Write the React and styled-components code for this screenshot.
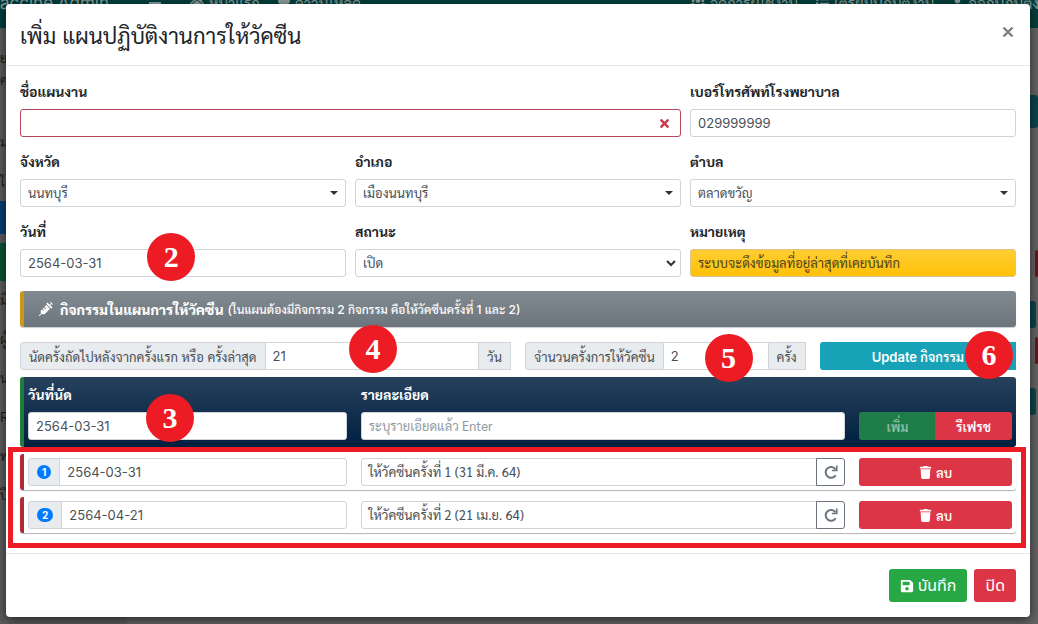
import React from "react";
import styled, { createGlobalStyle, css } from "styled-components";
import { FaBars, FaHome, FaHeart, FaUsers, FaList, FaUser, FaTrash, FaSave, FaTimes, FaSyringe } from "react-icons/fa";

const Global = createGlobalStyle`
  *, *::before, *::after { box-sizing: border-box; }
  body { margin: 0; background: #646464; }
  body, button, input, select, textarea { font-family: Inter, Sarabun, "Noto Sans", sans-serif; font-size: 13px; color: #495057; }
  button, input, select, textarea { margin: 0; }
`;

const Page = styled.div`
  position: relative;
  min-height: 100vh;
  overflow: hidden;
`;

/* The dimmed page under the dialog, scrolled a little way down. */
const Behind = styled.div`
  position: absolute;
  inset: -22px 0 0 0;
  display: flex;
  flex-direction: column;
  background: #646464;
`;
const Nav = styled.nav`
  display: flex;
  align-items: center;
  justify-content: space-between;
  height: 50px;
  flex: none;
  background: #033f3b;
  color: #8a9c9a;
  font-size: 15px;
  white-space: nowrap;
`;
const NavGroup = styled.div`
  display: flex;
  align-items: center;
  gap: 18px;
  margin-right: ${(p) => (p.$end ? "-18px" : 0)};
`;
const Brand = styled.span`
  width: 130px;
  font-size: 17px;
`;
const NavItem = styled.span`
  display: inline-flex;
  align-items: center;
  gap: 5px;
  ${(p) => p.$toggle && css`width: 24px;`}
`;
const Columns = styled.div`
  display: flex;
  justify-content: space-between;
  flex: 1;
`;
const Side = styled.div`
  width: 127px;
  padding-top: 20px;
  background: #5c5c5c;
  color: #1c1c1c;
`;
const SideItem = styled.div`
  height: ${(p) => p.$h}px;
  margin-bottom: 9px;
  background: ${(p) => p.$bg};
`;
const SideText = styled.div`
  height: ${(p) => p.$h || 39}px;
  line-height: 20px;
`;
const Actions = styled.div`
  display: flex;
  flex-direction: column;
  align-items: flex-end;
  width: 60px;
  padding-top: 67px;
`;
const ActionBlock = styled.div`
  width: ${(p) => p.$w || 40}px;
  height: ${(p) => p.$h || 27}px;
  margin: 0 ${(p) => p.$right || 0}px ${(p) => p.$gap}px 0;
  border-radius: 3px;
  background: ${(p) => p.$bg};
`;

const Modal = styled.section`
  position: relative;
  margin: 4px 8px 7px 6px;
  background: #fff;
  border-radius: 4px;
  box-shadow: 0 3px 12px rgba(0, 0, 0, 0.6);
`;
const Header = styled.header`
  display: flex;
  align-items: center;
  justify-content: space-between;
  height: 62px;
  padding: 0 14px;
  border-bottom: 1px solid #e2e4e7;
`;
const Title = styled.h1`
  margin: 0;
  padding-top: 2px;
  font-size: 22px;
  font-weight: 400;
  line-height: 32px;
  color: #212529;
`;
const Close = styled.button`
  display: flex;
  padding: 2px;
  margin-bottom: 6px;
  border: 0;
  background: none;
  color: #7f7f7f;
`;
const Body = styled.div`
  padding: 15px 14px 20px;
`;
const Fields = styled.div`
  display: grid;
  grid-template-columns: repeat(3, 1fr);
  gap: 14px 9px;
`;
const Field = styled.div`
  position: relative;
  min-width: 0;
  grid-column: span ${(p) => p.$span || 1};
`;
const Label = styled.label`
  display: block;
  height: 22px;
  margin-bottom: 6px;
  line-height: 22px;
  font-size: 14px;
  font-weight: 700;
  color: ${(p) => (p.$light ? "#fff" : "#212529")};
`;
const control = css`
  display: block;
  width: 100%;
  min-width: 0;
  height: 28px;
  padding: 0 7px;
  border: 1px solid #ced4da;
  border-radius: 3px;
  background: #fff;
  color: #495057;
  line-height: 26px;
  outline: none;
`;
const Input = styled.input`
  ${control}
  ${(p) => p.$invalid && css`border-color: #b5485a;`}
`;
const ThaiInput = styled.textarea.attrs({ rows: 1 })`
  ${control}
  font-family: Sarabun, "Noto Sans", sans-serif;
  resize: none;
  overflow: hidden;
  white-space: nowrap;
  ${(p) => p.$warn && css`
    background: linear-gradient(#ffcd33, #ffc107);
    border-color: #dcc58a;
    color: #4d4220;
  `}
  &::placeholder { color: #939a9f; opacity: 1; }
`;
const Select = styled.select`
  ${control}
  appearance: none;
`;
const Mark = styled.span`
  position: absolute;
  right: ${(p) => p.$right || 8}px;
  bottom: 0;
  display: flex;
  align-items: center;
  height: 28px;
  color: ${(p) => p.$color || "#333"};
  pointer-events: none;
`;
const Bar = styled.h2`
  display: flex;
  align-items: center;
  height: 36px;
  margin: 14px 0 15px;
  padding-left: 15px;
  border-left: 4px solid #c99a12;
  border-radius: 3px;
  background: linear-gradient(#828a91, #6c757d);
  box-shadow: 0 1px 1px rgba(0, 0, 0, 0.2);
  color: #fff;
  font-size: 14px;
  font-weight: 800;
  white-space: nowrap;
`;
const BarText = styled.span`
  margin: 0 4px 0 7px;
`;
const Hint = styled.small`
  font-size: 12px;
  font-weight: 500;
`;
const Settings = styled.div`
  display: grid;
  grid-template-columns: 35fr 20fr 14fr;
  gap: 14px;
  margin-bottom: 7px;
`;
const Group = styled.div`
  position: relative;
  display: flex;
  min-width: 0;
  & > * + * { margin-left: -1px; }
  & > :not(:first-child) { border-top-left-radius: 0; border-bottom-left-radius: 0; }
  & > :not(:last-child) { border-top-right-radius: 0; border-bottom-right-radius: 0; }
`;
const Addon = styled.label`
  display: flex;
  align-items: center;
  height: 28px;
  padding: 0 8px;
  border: 1px solid #ced4da;
  border-radius: 3px;
  background: #e9ecef;
  white-space: nowrap;
`;
const Button = styled.button`
  display: inline-flex;
  align-items: center;
  justify-content: center;
  gap: 4px;
  flex: ${(p) => (p.$large ? "none" : 1)};
  width: ${(p) => (p.$large ? "auto" : "100%")};
  height: ${(p) => (p.$large ? 33 : 28)}px;
  padding: 0 11px;
  border: 0;
  border-radius: 3px;
  background: ${(p) => p.$bg};
  color: #fff;
  font-weight: 600;
  white-space: nowrap;
  ${(p) => p.$large && css`
    font-family: "Noto Sans Thai", Inter, "Noto Sans", sans-serif;
    font-size: 16px;
    font-weight: 400;
  `}
  &:disabled { color: #8fc0a4; }
`;
const Redo = styled.button`
  display: flex;
  align-items: center;
  justify-content: center;
  flex: none;
  width: 29px;
  height: 28px;
  padding: 0;
  border: 1px solid #6c757d;
  border-radius: 3px;
  background: #fff;
  color: #6c757d;
`;
const line = css`
  display: grid;
  grid-template-columns: 25fr 38fr 12fr;
  column-gap: 14px;
  align-items: end;
  border-left: 4px solid;
  border-radius: 3px;
`;
const EntryPanel = styled.div`
  ${line}
  padding: 7px 4px;
  border-left-color: #1f7d3a;
  background: linear-gradient(#26415c, #001f3f);
`;
const List = styled.ul`
  position: relative;
  display: grid;
  gap: 7px;
  margin: 7px 0 0;
  padding: 0;
  list-style: none;
  /* red call-out frame over the list */
  &::after {
    content: "";
    position: absolute;
    inset: -7px -10px -15px -12px;
    border: 5px solid #ed1c24;
    pointer-events: none;
  }
`;
const Item = styled.li`
  ${line}
  padding: 4px;
  border-left-color: #b02a37;
  box-shadow: 0 1px 1px rgba(0, 0, 0, 0.3);
`;
const Badge = styled.span`
  padding: 0 5px;
  border-radius: 7px;
  background: #007bff;
  color: #fff;
  font-size: 10px;
  font-weight: 700;
  line-height: 14px;
  text-align: center;
`;
const Callout = styled.span`
  position: absolute;
  left: ${(p) => p.$left};
  bottom: ${(p) => p.$bottom}px;
  z-index: 1;
  display: flex;
  align-items: center;
  justify-content: center;
  width: 48px;
  height: 48px;
  && { border-radius: 50%; margin: 0; }
  background: #ed1c24;
  color: #fff;
  font: 700 30px/1 "Liberation Serif", serif;
`;
const Footer = styled.footer`
  display: flex;
  justify-content: flex-end;
  gap: 7px;
  padding: 15px 14px;
  border-top: 1px solid #e2e4e7;
`;

const Caret = () => (
  <Mark>
    <svg width="8" height="4" viewBox="0 0 8 4"><path d="M0 0h8L4 4z" fill="currentColor" /></svg>
  </Mark>
);
const Chevron = () => (
  <Mark $right={5}>
    <svg width="10" height="7" viewBox="0 0 10 7"><path d="M1 1l4 4 4-4" fill="none" stroke="currentColor" strokeWidth="2" /></svg>
  </Mark>
);
const RedoIcon = () => (
  <svg width="14" height="14" viewBox="0 0 14 14" fill="none" stroke="currentColor" strokeWidth="2">
    <path d="M11.6 4.4A5.4 5.4 0 1 0 11.7 10.2" />
    <path d="M12.8 0.6v4.9H7.9" strokeWidth="1.6" />
  </svg>
);

const PLACES = [
  ["province", "จังหวัด", "นนทบุรี"],
  ["district", "อำเภอ", "เมืองนนทบุรี"],
  ["subdistrict", "ตำบล", "ตลาดขวัญ"],
];
const DOSES = [
  ["2564-03-31", "ให้วัคซีนครั้งที่ 1 (31 มี.ค. 64)"],
  ["2564-04-21", "ให้วัคซีนครั้งที่ 2 (21 เม.ย. 64)"],
];

function PageBehind() {
  return (
    <Behind aria-hidden="true">
      <Nav>
        <NavGroup>
          <Brand>accine Admin</Brand>
          <NavItem $toggle><FaBars size={14} /></NavItem>
          <NavItem><FaHome size={14} />หน้าแรก</NavItem>
          <NavItem><FaHeart size={12} />ดาวน์โหลด</NavItem>
        </NavGroup>
        <NavGroup $end>
          <NavItem><FaUsers size={14} />จัดการผู้ใช้งาน</NavItem>
          <NavItem><FaList size={13} />เตรียมปฏิบัติงาน</NavItem>
          <NavItem><FaUser size={11} />ออกปฏิบัติงาน</NavItem>
        </NavGroup>
      </Nav>
      <Columns>
        <Side>
          <SideText $h={22}>ย</SideText>
          <SideText $h={62}>ค</SideText>
          <SideText $h={40}>มา</SideText>
          <SideText $h={29}>ใ</SideText>
          <SideItem $h={33} $bg="#063f70" />
          <SideItem $h={38} $bg="#0b5134" />
          <SideText>มี</SideText>
          <SideText>ผู้</SideText>
          <SideText>น</SideText>
          <SideText>R</SideText>
          <SideText>พ</SideText>
          <SideText>ปี</SideText>
        </Side>
        <Actions>
          <ActionBlock $bg="#0b454d" $h={33} $gap={122} />
          <ActionBlock $bg="#64171f" $w={3} $gap={24} />
          <ActionBlock $bg="#0b454d" $right={2} $gap={9} />
          <ActionBlock $bg="#64171f" $w={3} $gap={24} />
          <ActionBlock $bg="#0b454d" $right={2} $gap={0} />
        </Actions>
      </Columns>
    </Behind>
  );
}

export default function App() {
  return (
    <Page>
      <Global />
      <PageBehind />
      <Modal role="dialog" aria-labelledby="title">
        <Header>
          <Title id="title">เพิ่ม แผนปฏิบัติงานการให้วัคซีน</Title>
          <Close type="button" aria-label="ปิด">
            <svg width="12" height="12" viewBox="0 0 12 12" stroke="currentColor" strokeWidth="2.4"><path d="M1.5 1.5l9 9M10.5 1.5l-9 9" /></svg>
          </Close>
        </Header>
        <Body>
          <Fields>
            <Field $span={2}>
              <Label htmlFor="plan">ชื่อแผนงาน</Label>
              <Input id="plan" $invalid />
              <Mark $right={10} $color="#c8374a"><FaTimes size={13} /></Mark>
            </Field>
            <Field>
              <Label htmlFor="phone">เบอร์โทรศัพท์โรงพยาบาล</Label>
              <Input id="phone" defaultValue="029999999" />
            </Field>
            {PLACES.map(([id, label, value]) => (
              <Field key={id}>
                <Label htmlFor={id}>{label}</Label>
                <Select id={id}><option>{value}</option></Select>
                <Caret />
              </Field>
            ))}
            <Field>
              <Label htmlFor="date">วันที่</Label>
              <Input id="date" defaultValue="2564-03-31" />
              <Callout $left="39%" $bottom={-4}>2</Callout>
            </Field>
            <Field>
              <Label htmlFor="status">สถานะ</Label>
              <Select id="status"><option>เปิด</option></Select>
              <Chevron />
            </Field>
            <Field>
              <Label htmlFor="note">หมายเหตุ</Label>
              <ThaiInput id="note" $warn readOnly defaultValue="ระบบจะดึงข้อมูลที่อยู่ล่าสุดที่เคยบันทึก" />
            </Field>
          </Fields>
          <Bar>
            <FaSyringe size={14} />
            <BarText>กิจกรรมในแผนการให้วัคซีน</BarText>
            <Hint>(ในแผนต้องมีกิจกรรม 2 กิจกรรม คือให้วัคซีนครั้งที่ 1 และ 2)</Hint>
          </Bar>
          <Settings>
            <Group>
              <Addon htmlFor="days">นัดครั้งถัดไปหลังจากครั้งแรก หรือ ครั้งล่าสุด</Addon>
              <Input id="days" defaultValue="21" />
              <Addon as="span">วัน</Addon>
              <Callout $left="67%" $bottom={-3}>4</Callout>
            </Group>
            <Group>
              <Addon htmlFor="times">จำนวนครั้งการให้วัคซีน</Addon>
              <Input id="times" defaultValue="2" />
              <Addon as="span">ครั้ง</Addon>
              <Callout $left="64%" $bottom={-12}>5</Callout>
            </Group>
            <Group>
              <Button type="button" $bg="#17a2b8">Update กิจกรรม</Button>
              <Callout $left="74%" $bottom={-9}>6</Callout>
            </Group>
          </Settings>
          <EntryPanel>
            <Field>
              <Label htmlFor="appointment" $light>วันที่นัด</Label>
              <Input id="appointment" defaultValue="2564-03-31" />
              <Callout $left="37%" $bottom={-2}>3</Callout>
            </Field>
            <Field>
              <Label htmlFor="detail" $light>รายละเอียด</Label>
              <ThaiInput id="detail" placeholder="ระบุรายเอียดแล้ว Enter" />
            </Field>
            <Group>
              <Button type="button" disabled $bg="#1f7d48">เพิ่ม</Button>
              <Button type="button" $bg="#dc3545">รีเฟรช</Button>
            </Group>
          </EntryPanel>
          <List>
            {DOSES.map(([date, detail], i) => (
              <Item key={date}>
                <Group>
                  <Addon htmlFor={"dose" + i}><Badge>{i + 1}</Badge></Addon>
                  <Input id={"dose" + i} defaultValue={date} />
                </Group>
                <Group>
                  <ThaiInput aria-label="รายละเอียด" defaultValue={detail} />
                  <Redo type="button" aria-label="รีเฟรช"><RedoIcon /></Redo>
                </Group>
                <Button type="button" $bg="#dc3545"><FaTrash size={13} />ลบ</Button>
              </Item>
            ))}
          </List>
        </Body>
        <Footer>
          <Button type="button" $large $bg="#28a745"><FaSave size={14} />บันทึก</Button>
          <Button type="button" $large $bg="#dc3545">ปิด</Button>
        </Footer>
      </Modal>
    </Page>
  );
}
